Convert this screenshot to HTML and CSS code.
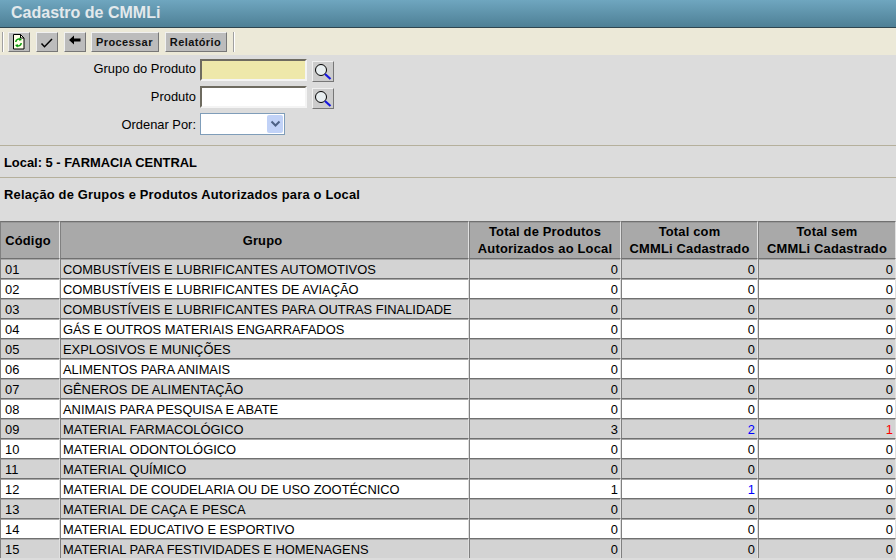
FILE: index.html
```html
<!DOCTYPE html>
<html lang="pt-BR">
  <head>
    <meta charset="UTF-8" />
    <title>Cadastro de CMMLi</title>
    <link rel="stylesheet" href="styles.css">
  </head>
  <body>
    <div class="titlebar">Cadastro de CMMLi</div>

    <div class="toolbar">
      <span class="grip"></span>
      <button class="tool-btn icon-btn" type="button" aria-label="Atualizar">
        <svg width="16" height="16" viewBox="0 0 16 16">
          <path d="M2.500 .5h7l3.500 3.500v11h-10.500z" fill="#ffffe8" stroke="#000" />
          <path d="M9.500 .5v3.500h3.500" fill="none" stroke="#000" />
          <path d="M4.800 8a3 3 0 0 1 4.700-2.400M10.200 9a3 3 0 0 1-4.700 2.400" fill="none" stroke="#0a9a0a" stroke-width="1.500" />
          <path d="M8.500 3.500l2.500 2.500-3 .8zM6.500 13.500l-2.500-2.500 3-.8z" fill="#0a9a0a" />
        </svg>
      </button>
      <button class="tool-btn icon-btn" type="button" aria-label="Confirmar">
        <svg width="16" height="16" viewBox="0 0 16 16">
          <path d="M2.500 9.500l3 3.200 7.500-7.700" fill="none" stroke="#000" stroke-width="1.500" />
        </svg>
      </button>
      <button class="tool-btn icon-btn" type="button" aria-label="Voltar">
        <svg width="16" height="16" viewBox="0 0 16 16">
          <path d="M2 6l5-4.500v3h6.500v3h-6.500v3z" fill="#000" />
        </svg>
      </button>
      <button class="tool-btn text-btn" type="button">Processar</button>
      <button class="tool-btn text-btn" type="button">Relatório</button>
      <span class="grip"></span>
    </div>

    <form class="filters">
      <div class="field">
        <label for="grupo">Grupo do Produto</label>
        <input class="text-input required" type="text" id="grupo" />
        <button class="search-btn" type="button" aria-label="Buscar grupo">
          <svg width="18" height="18" viewBox="0 0 18 18">
            <circle cx="7" cy="7" r="5.500" fill="#e8eef0" stroke="#000" />
            <path d="M11 11l5.500 5" stroke="#1515e0" stroke-width="2.200" />
          </svg>
        </button>
      </div>
      <div class="field">
        <label for="produto">Produto</label>
        <input class="text-input" type="text" id="produto" />
        <button class="search-btn" type="button" aria-label="Buscar produto">
          <svg width="18" height="18" viewBox="0 0 18 18">
            <circle cx="7" cy="7" r="5.500" fill="#e8eef0" stroke="#000" />
            <path d="M11 11l5.500 5" stroke="#1515e0" stroke-width="2.200" />
          </svg>
        </button>
      </div>
      <div class="field">
        <label for="ordem">Ordenar Por:</label>
        <div class="select-box" id="ordem">
          <span class="select-arrow">
            <svg width="11" height="8" viewBox="0 0 11 8">
              <path d="M1.500 1.500l4 4 4-4" fill="none" stroke="#4d6185" stroke-width="2" />
            </svg>
          </span>
        </div>
      </div>
    </form>

    <div class="info-line">Local: 5 - FARMACIA CENTRAL</div>
    <div class="info-line list-title">Relação de Grupos e Produtos Autorizados para o Local</div>

    <table class="grid">
      <colgroup>
        <col class="col-code" />
        <col class="col-name" />
        <col class="col-auth" />
        <col class="col-with" />
        <col class="col-without" />
      </colgroup>
      <thead>
        <tr>
          <th>Código</th>
          <th>Grupo</th>
          <th>Total de Produtos<br />Autorizados ao Local</th>
          <th>Total com<br />CMMLi Cadastrado</th>
          <th>Total sem<br />CMMLi Cadastrado</th>
        </tr>
      </thead>
      <tbody>
        <tr class="odd"><td>01</td><td>COMBUSTÍVEIS E LUBRIFICANTES AUTOMOTIVOS</td><td class="num">0</td><td class="num">0</td><td class="num">0</td></tr>
        <tr><td>02</td><td>COMBUSTÍVEIS E LUBRIFICANTES DE AVIAÇÃO</td><td class="num">0</td><td class="num">0</td><td class="num">0</td></tr>
        <tr class="odd"><td>03</td><td>COMBUSTÍVEIS E LUBRIFICANTES PARA OUTRAS FINALIDADE</td><td class="num">0</td><td class="num">0</td><td class="num">0</td></tr>
        <tr><td>04</td><td>GÁS E OUTROS MATERIAIS ENGARRAFADOS</td><td class="num">0</td><td class="num">0</td><td class="num">0</td></tr>
        <tr class="odd"><td>05</td><td>EXPLOSIVOS E MUNIÇÕES</td><td class="num">0</td><td class="num">0</td><td class="num">0</td></tr>
        <tr><td>06</td><td>ALIMENTOS PARA ANIMAIS</td><td class="num">0</td><td class="num">0</td><td class="num">0</td></tr>
        <tr class="odd"><td>07</td><td>GÊNEROS DE ALIMENTAÇÃO</td><td class="num">0</td><td class="num">0</td><td class="num">0</td></tr>
        <tr><td>08</td><td>ANIMAIS PARA PESQUISA E ABATE</td><td class="num">0</td><td class="num">0</td><td class="num">0</td></tr>
        <tr class="odd"><td>09</td><td>MATERIAL FARMACOLÓGICO</td><td class="num">3</td><td class="num link">2</td><td class="num alert">1</td></tr>
        <tr><td>10</td><td>MATERIAL ODONTOLÓGICO</td><td class="num">0</td><td class="num">0</td><td class="num">0</td></tr>
        <tr class="odd"><td>11</td><td>MATERIAL QUÍMICO</td><td class="num">0</td><td class="num">0</td><td class="num">0</td></tr>
        <tr><td>12</td><td>MATERIAL DE COUDELARIA OU DE USO ZOOTÉCNICO</td><td class="num">1</td><td class="num link">1</td><td class="num">0</td></tr>
        <tr class="odd"><td>13</td><td>MATERIAL DE CAÇA E PESCA</td><td class="num">0</td><td class="num">0</td><td class="num">0</td></tr>
        <tr><td>14</td><td>MATERIAL EDUCATIVO E ESPORTIVO</td><td class="num">0</td><td class="num">0</td><td class="num">0</td></tr>
        <tr class="odd"><td>15</td><td>MATERIAL PARA FESTIVIDADES E HOMENAGENS</td><td class="num">0</td><td class="num">0</td><td class="num">0</td></tr>
      </tbody>
    </table>
  </body>
</html>
```

FILE: styles.css
```css
* {
  box-sizing: border-box;
  font-family: "Liberation Sans", Arial, sans-serif;
}

html,
body {
  height: 560px;
  overflow: hidden;
}

body {
  margin: 0;
  background: #dcdcdc;
  color: #000;
  font-size: 12.9px;
}

.titlebar {
  height: 28px;
  padding: 4px 0 0 11px;
  background: linear-gradient(#6fa6bf, #4e8096);
  border-bottom: 1px solid #2f4650;
  color: #e3e9ec;
  font-size: 16px;
  font-weight: bold;
}

.toolbar {
  height: 27px;
  padding-left: 2px;
  display: flex;
  align-items: center;
  gap: 6px;
  background: #ece9d8;
}

.grip {
  width: 2px;
  height: 20px;
  margin-right: -2px;
  background: #a0a0a0;
  border-right: 1px solid #fff;
}

.tool-btn {
  height: 20px;
  padding: 0;
  display: flex;
  align-items: center;
  justify-content: center;
  background: #bcbcbc;
  border: 1px solid;
  border-color: #f0f0f0 #777 #777 #f0f0f0;
}

.icon-btn {
  width: 22px;
}

.icon-btn + .text-btn {
  margin-left: -1px;
}

.text-btn {
  padding: 0 5px 0 4px;
  font-size: 11px;
  font-weight: bold;
  letter-spacing: 0.4px;
  color: #111;
}

.filters {
  height: 91px;
  padding-top: 4px;
  border-bottom: 1px solid #b5b09c;
}

.field {
  height: 27px;
  display: flex;
  align-items: flex-start;
}

.field label {
  width: 196px;
  padding-top: 2px;
  text-align: right;
}

.field + .field label {
  padding-top: 3px;
}

.field:last-child label {
  padding-top: 4px;
}

.text-input {
  width: 107px;
  height: 22px;
  margin: 0 0 0 4px;
  background: #fff;
  border: 2px solid;
  border-color: #6e6b60 #f4f4f4 #f4f4f4 #6e6b60;
}

.text-input.required {
  background: #eee8aa;
}

.search-btn {
  width: 22px;
  height: 21px;
  margin: 2px 0 0 5px;
  padding: 0;
  display: flex;
  align-items: center;
  justify-content: center;
  background: #cccccc;
  border: 1px solid;
  border-color: #f0f0f0 #777 #777 #f0f0f0;
}

.select-box {
  width: 85px;
  height: 22px;
  margin-left: 4px;
  padding: 1px;
  display: flex;
  justify-content: flex-end;
  background: #fff;
  border: 1px solid #7f9db9;
}

.select-arrow {
  width: 16px;
  display: flex;
  align-items: center;
  justify-content: center;
  background: #c1d2f7;
  border-radius: 2px;
}

.info-line {
  height: 32px;
  padding: 9px 0 0 4px;
  border-bottom: 1px solid #b5b09c;
  font-weight: bold;
}

.list-title {
  height: 43px;
  border-bottom: 0;
  letter-spacing: 0.2px;
}

.grid {
  width: 896px;
  table-layout: fixed;
  border-collapse: separate;
  border-spacing: 0;
}

.col-code { width: 60px; }
.col-name { width: 409px; }
.col-auth { width: 152px; }
.col-with { width: 137px; }
.col-without { width: 138px; }

.grid th {
  height: 37px;
  padding: 0 2px;
  background: #a9a9a9;
  border-top: 1px solid #707070;
  border-left: 1px solid #808080;
  border-right: 1px solid #e0e0e0;
  box-shadow: inset 0 1px #989898;
  font-size: 12.9px;
  line-height: 17px;
  letter-spacing: 0.2px;
}

.grid th:nth-child(-n+2) {
  padding-right: 6px;
}

.grid td {
  height: 20px;
  padding: 1px 2px 0;
  background: #fff;
  border-top: 1px solid #707070;
  border-left: 1px solid #808080;
  border-right: 1px solid #e0e0e0;
  box-shadow: inset 0 1px #a8a8a8;
  overflow: hidden;
  white-space: nowrap;
}

.grid td:first-child {
  padding-left: 4px;
}

.grid .odd td {
  background: #d3d3d3;
}

.grid .num {
  text-align: right;
}

.grid .link {
  color: #0000ff;
}

.grid .alert {
  color: #ff0000;
}
```
